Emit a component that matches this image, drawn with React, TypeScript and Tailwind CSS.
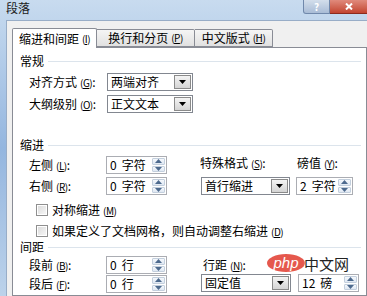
import React from "react";

function Key({ k }: { k: string }) {
  return (
    <span className="text-[10px] ml-[3px] tracking-[-0.5px]">
      (<span className="underline">{k}</span>)
    </span>
  );
}

function Arrow({ up, color }: { up?: boolean; color: string }) {
  return (
    <svg width="7" height="4" viewBox="0 0 7 4">
      <path d={up ? "M0 4 L3.5 0 L7 4 Z" : "M0 0 L7 0 L3.5 4 Z"} fill={color} />
    </svg>
  );
}

function Select({ value, w }: { value: string; w: string }) {
  return (
    <div className={`flex h-full border border-[#828790] bg-white ${w}`}>
      <div className="flex-1 pl-[3px] flex items-center">{value}</div>
      <div className="w-[17px] m-px border border-[#8a8a8a] bg-gradient-to-b from-[#f4f4f4] to-[#d4d4d4] flex items-center justify-center">
        <Arrow color="#000" />
      </div>
    </div>
  );
}

function Spin({ value, w }: { value: string; w: string }) {
  const [num, unit] = value.split(" ");
  return (
    <div className={`flex h-full border border-[#abadb3] bg-white ${w}`}>
      <div className="flex-1 pl-[3px] flex items-center">
        <span>{num}</span>
        <span className="ml-[5px]">{unit}</span>
      </div>
      <div className="w-[15px] flex flex-col p-px gap-px">
        <div className="flex-1 rounded-[1px] border border-[#c3cfdd] bg-gradient-to-b from-[#f5f8fc] to-[#dfe8f3] flex items-center justify-center">
          <Arrow up color="#4d6a8e" />
        </div>
        <div className="flex-1 rounded-[1px] border border-[#c3cfdd] bg-gradient-to-b from-[#f5f8fc] to-[#dfe8f3] flex items-center justify-center">
          <Arrow color="#4d6a8e" />
        </div>
      </div>
    </div>
  );
}

function Heading({ text }: { text: string }) {
  return (
    <div className="flex items-center h-[14px]">
      <span>{text}</span>
      <div className="flex-1 h-px bg-[#dce4ec] ml-[4px] mr-[5px]" />
    </div>
  );
}

function Check({ children }: { children: React.ReactNode }) {
  return (
    <div className="flex items-center h-[14px] pl-[16px]">
      <div className="w-[12px] h-[12px] border border-[#8f8f8f] p-px">
        <div className="w-full h-full bg-gradient-to-br from-[#dcdcdc] to-[#f6f6f6]" />
      </div>
      <span className="ml-[4px]">{children}</span>
    </div>
  );
}

export default function App() {
  return (
    <div className='w-[367px] h-[296px] overflow-hidden relative flex flex-col bg-gradient-to-b from-[#c8dbef] via-[#94b6df] to-[#bcd2ea] font-["Noto_Sans_CJK_SC","Noto_Sans",sans-serif] text-[12px] leading-none text-black'>
      {/* title bar */}
      <div className="h-[20px] flex items-start justify-between shrink-0">
        <span className="pl-[6px] pt-[2px] text-[12px] text-[#1b1b1b]">段落</span>
        <div className="flex">
          <div className="w-[27px] h-[14px] rounded-bl-[3px] border border-t-0 border-[#7088ab] bg-gradient-to-b from-[#d3deeb] to-[#a9bcd6] flex items-center justify-center text-[10px] font-bold text-white">
            ?
          </div>
          <div className="w-[37px] h-[14px] border-b border-[#8c2a1d] bg-gradient-to-b from-[#e08a7c] to-[#c2432f] flex items-center justify-center">
            <svg width="8" height="7" viewBox="0 0 8 7">
              <path d="M1 0.5 L7 6.5 M7 0.5 L1 6.5" stroke="#fff" strokeWidth="2" />
            </svg>
          </div>
        </div>
      </div>

      {/* body */}
      <div className="flex-1 ml-[6px] bg-[#f0f0f0] border-l border-t border-[#98adc7] pl-[5px] pt-[6px] flex flex-col">
        {/* tabs */}
        <div className="flex items-end h-[20px] shrink-0 relative z-10">
          <div className="w-[85px] h-[20px] mb-[-1px] bg-white border border-b-0 border-[#898c95] rounded-t-[2px] flex items-center justify-center">
            缩进和间距<Key k="I" />
          </div>
          <div className="w-[98px] h-[18px] border border-l-0 border-[#898c95] rounded-tr-[2px] bg-gradient-to-b from-[#f5f5f5] to-[#e1e1e1] flex items-center justify-center">
            换行和分页<Key k="P" />
          </div>
          <div className="w-[78px] h-[18px] border border-l-0 border-[#898c95] rounded-tr-[2px] bg-gradient-to-b from-[#f5f5f5] to-[#e1e1e1] flex items-center justify-center">
            中文版式<Key k="H" />
          </div>
        </div>

        {/* panel */}
        <div className="w-[355px] flex-1 bg-white border border-[#898c95] pl-[7px] pt-[6px] flex flex-col">
          <Heading text="常规" />
          <div className="flex items-center h-[18px] mt-[5px] pl-[9px]">
            <span className="w-[78px]">
              对齐方式<Key k="G" />:
            </span>
            <Select value="两端对齐" w="w-[86px]" />
          </div>
          <div className="flex items-center h-[18px] mt-[4px] pl-[9px]">
            <span className="w-[78px]">
              大纲级别<Key k="O" />:
            </span>
            <Select value="正文文本" w="w-[86px]" />
          </div>

          <div className="mt-[25px]">
            <Heading text="缩进" />
          </div>
          <div className="flex items-center h-[18px] mt-[4px] pl-[9px]">
            <span className="w-[77px]">
              左侧<Key k="L" />:
            </span>
            <Spin value="0 字符" w="w-[61px]" />
            <span className="ml-[33px] w-[97px] -mt-[5px]">
              特殊格式<Key k="S" />:
            </span>
            <span className="-mt-[5px]">
              磅值<Key k="Y" />:
            </span>
          </div>
          <div className="flex items-center h-[18px] mt-[3px] pl-[9px]">
            <span className="w-[77px]">
              右侧<Key k="R" />:
            </span>
            <Spin value="0 字符" w="w-[61px]" />
            <div className="ml-[34px] h-full">
              <Select value="首行缩进" w="w-[89px]" />
            </div>
            <div className="ml-[6px] h-full">
              <Spin value="2 字符" w="w-[57px]" />
            </div>
          </div>

          <div className="mt-[8px]">
            <Check>
              对称缩进<Key k="M" />
            </Check>
          </div>
          <div className="mt-[7px]">
            <Check>
              如果定义了文档网格，则自动调整右缩进<Key k="D" />
            </Check>
          </div>

          <div className="mt-[2px]">
            <Heading text="间距" />
          </div>
          <div className="flex items-center h-[18px] mt-[2px] pl-[9px]">
            <span className="w-[77px]">
              段前<Key k="B" />:
            </span>
            <Spin value="0 行" w="w-[61px]" />
            <span className="ml-[36px]">
              行距<Key k="N" />:
            </span>
          </div>
          <div className="flex items-center h-[18px] mt-[1px] pl-[9px]">
            <span className="w-[77px]">
              段后<Key k="F" />:
            </span>
            <Spin value="0 行" w="w-[61px]" />
            <div className="ml-[34px] h-full -mt-[3px]">
              <Select value="固定值" w="w-[90px]" />
            </div>
            <div className="ml-[7px] h-full -mt-[2px]">
              <Spin value="12 磅" w="w-[61px]" />
            </div>
          </div>
        </div>
      </div>

      {/* watermark */}
      <div className="absolute left-[267px] top-[254px] flex items-center pointer-events-none">
        <div className="w-[38px] h-[18px] rounded-[50%] bg-[#e2463a]/90 flex items-center justify-center text-white italic text-[15px] leading-none pb-[2px] font-['Liberation_Sans',sans-serif]">
          php
        </div>
        <span className="text-[15px] text-[#222] ml-[-1px] [text-shadow:0_0_2px_#fff]">中文网</span>
      </div>
    </div>
  );
}
